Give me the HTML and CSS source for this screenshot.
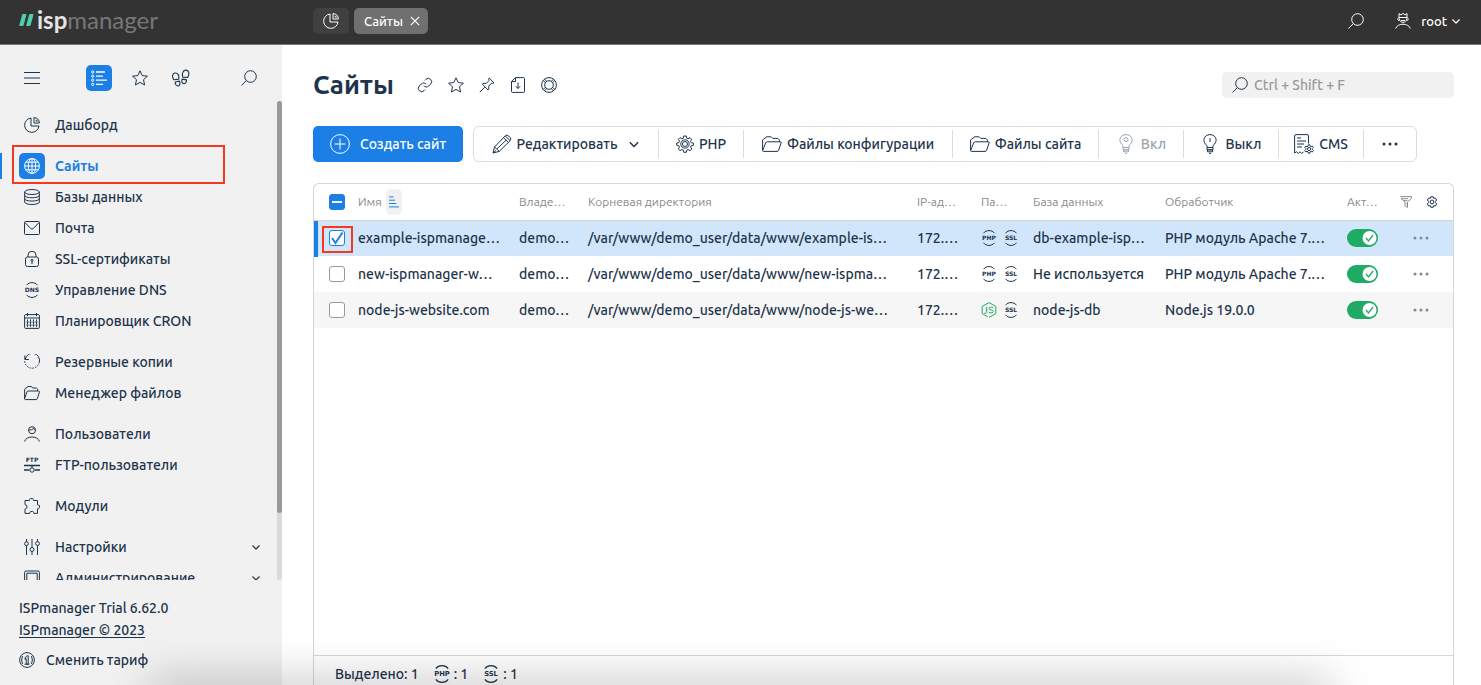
FILE: index.html
```html
<!DOCTYPE html>
<html lang="ru">
<head>
<meta charset="utf-8">
<title>Сайты — ispmanager</title>
<link rel="stylesheet" href="styles.css">
</head>
<body>
<svg class="sprite" aria-hidden="true">
  <symbol id="pie" viewBox="0 0 16 16"><path d="M7 1A7.200 7.200 0 1 0 15 9H7Z"/><path d="M10 .6V6h5.400A5.800 5.800 0 0 0 10 .6ZM12.200 2.800V4h1.600"/></symbol>
  <symbol id="search" viewBox="0 0 16 16"><circle cx="9.500" cy="6.500" r="5.800"/><path d="M5.300 10.600.5 15.500"/></symbol>
  <symbol id="menu" viewBox="0 0 16 16"><path d="M0 2.500h16M0 8h16M0 13.500h16"/></symbol>
  <symbol id="list" viewBox="0 0 16 16"><path stroke-width="1.300" d="M5 2h9M5 6.200h7M5 10.200h11M5 14.400h7"/><circle cx="1.700" cy="2" r="1.100"/><circle cx="1.700" cy="6.200" r="1.100"/><circle cx="1.700" cy="10.200" r="1.100"/><circle cx="1.700" cy="14.400" r="1.100"/></symbol>
  <symbol id="star" viewBox="0 0 16 16"><path d="m8 .8 2.200 4.800 5.200.6-3.900 3.500 1.100 5.300L8 12.400 3.400 15l1.100-5.300L.6 6.200l5.200-.6Z"/></symbol>
  <symbol id="steps" viewBox="0 0 16 16"><path d="M1.800 9.600C-.2 7.300.2 4.200 2.400 3.600 5 3 6.600 5.600 6 9ZM2.800 11.500l3.700-.7c1.100 1.700.6 3.800-.8 4.200-1.600.4-2.900-1.300-2.900-3.500ZM9.600 7.200C8.600 4.500 9.700 1.300 12 1c2.700-.3 4 3 1.900 6.600ZM9 9l3.900.7c0 2.200-1.200 3.700-2.700 3.300C8.800 12.600 8.300 10.700 9 9Z"/></symbol>
  <symbol id="globe" viewBox="0 0 16 16"><circle cx="8" cy="8" r="7.400"/><ellipse cx="8" cy="8" rx="3.700" ry="7.400"/><path d="M8 .6v14.800M.6 8h14.800M1.800 4.200h12.400M1.800 11.800h12.400"/></symbol>
  <symbol id="db" viewBox="0 0 16 16"><ellipse cx="8" cy="3" rx="7.300" ry="2.500"/><path d="M.7 3v10c0 3.300 14.600 3.300 14.600 0V3M.7 6.300c0 3.300 14.600 3.300 14.600 0M.7 9.600c0 3.300 14.600 3.300 14.600 0"/></symbol>
  <symbol id="mail" viewBox="0 0 16 16"><rect x=".5" y="1.500" width="15" height="13" rx="1"/><path d="m1 2.500 5.700 6q1.300 1.200 2.600 0l5.700-6"/></symbol>
  <symbol id="lock" viewBox="0 0 16 16"><rect x="1.500" y="6" width="13" height="9.500" rx="2"/><path d="M4 6V4.200a4 4 0 0 1 8 0V6M8 10v3"/><circle cx="8" cy="9.300" r="1"/></symbol>
  <symbol id="arcs" viewBox="0 0 16 16"><path d="M2.500 3.200c2.600-3.500 8.400-3.500 11 0M2.500 12.800c2.600 3.500 8.400 3.500 11 0"/></symbol>
  <symbol id="cal" viewBox="0 0 16 16"><rect x=".6" y="1.600" width="14.800" height="13.800" rx="1"/><path d="M.6 5h14.800M3.500 0v3M12.500 0v3"/><path stroke-dasharray="2 .6" d="M3.500 6.500v8M6.500 6.500v8M9.500 6.500v8M12.500 6.500v8"/><path opacity=".6" d="M2 9h12M2 12h12"/></symbol>
  <symbol id="backup" viewBox="0 0 16 16"><path d="M1.300 5A7.200 7.200 0 0 1 15.400 8M.8 1.500v4h4"/><path stroke-dasharray="1.600 1.200" d="M15.400 8A7.400 7.400 0 0 1 .7 7"/></symbol>
  <symbol id="folder" viewBox="0 0 20 16"><path d="M.6 14.500V4l1.600-1.600h1L4.300.8h4.800l1.600 1.600h5.200L17.400 4v1.800M.6 14.500 3.700 6.800q.4-1 1.500-1h13q1.400 0 .9 1.200l-2.500 7.300q-.4 1.100-1.600 1.100H1.400q-.8 0-.8-.9Z"/></symbol>
  <symbol id="folder-small" viewBox="0 0 16 16"><path d="M.6 13.700V4.200L1.900 3h.8l1-1.500h3.700L8.600 3h3.800l1.300 1.200V6M.6 13.700 2.900 7q.3-1 1.200-1h10.300q1.300 0 1 1.200l-2 6.300q-.4 1.100-1.400 1.100H1.400q-.8 0-.8-.9Z"/></symbol>
  <symbol id="user" viewBox="0 0 16 16"><circle cx="8" cy="4.200" r="3.500"/><path d="M4.600 4q3.200.5 5-1.500.5 1.400 1.800 1.500M.6 15.500c1.200-6 13.600-6 14.800 0"/></symbol>
  <symbol id="ftp-line" viewBox="0 0 16 16"><path stroke-width="1.300" d="M0 8.500h16M0 13h5.300M10.700 13H16M8 8.500v2.200"/><circle cx="8" cy="13" r="2.200"/></symbol>
  <symbol id="puzzle" viewBox="0 0 16 16"><path d="M1 2.500h4.300c.5-.5-.2-1.800 1.200-1.900h1.800c1.400.1.700 1.400 1.200 1.900h4v4.200c.5.600 1.900-.1 2 1.300v1.500c-.1 1.400-1.500.7-2 1.300v4.600H9.800c-.4-.4.100-1.900-1.200-2H7c-1.300.1-.8 1.600-1.200 2H1v-4.500c.5-.6 1.800.1 1.900-1.300V8C2.800 6.600 1.500 7.300 1 6.700Z"/></symbol>
  <symbol id="sliders" viewBox="0 0 16 16"><path d="M2.500 0v3M2.500 6.500V16M8 0v8.500M8 12.500V16M13.500 0v2.500M13.500 6.500V16"/><circle cx="2.500" cy="4.700" r="1.900"/><circle cx="8" cy="10.500" r="2"/><circle cx="13.500" cy="4.500" r="1.900"/></symbol>
  <symbol id="screen" viewBox="0 0 16 16"><path d="M.6 13V2.500Q.6 1 2 1h12q1.400 0 1.400 1.500V13M2.800 13V3.200h10.400V13M0 15h16"/></symbol>
  <symbol id="down" viewBox="0 0 10 10"><path stroke-width="1.200" d="m1.500 3.500 3.500 3.500 3.500-3.500"/></symbol>
  <symbol id="coin" viewBox="0 0 16 16"><circle cx="8" cy="8" r="7.400"/><path d="M3.500 4q-1.800 4 0 8M12.500 4q1.800 4 0 8M6 6l1.800-2.200h1.400v8.400h-2V6.600L6 7.500ZM5.500 12.200h5"/></symbol>
  <symbol id="close" viewBox="0 0 10 10"><path stroke-width="1.200" d="m.8.8 8.400 8.400M9.200.8.8 9.200"/></symbol>
  <symbol id="king" viewBox="0 0 16 16"><path d="M4 .5 6 2l2-1.700L10 2l2-1.500v4H4ZM3.800 4.500C2.400 5.200 2.500 7.500 4 7.500M12.200 4.500c1.400.7 1.300 3-.2 3M4.300 5.500c0 5.200 7.400 5.200 7.400 0M6 7.500h4M.7 15.500c1.800-5.700 12.800-5.700 14.600 0"/></symbol>
  <symbol id="link" viewBox="0 0 24 24"><path stroke-width="1.500" d="M10 13a5 5 0 0 0 7.540.54l3-3a5 5 0 0 0-7.070-7.070l-1.720 1.710M14 11a5 5 0 0 0-7.540-.54l-3 3a5 5 0 0 0 7.070 7.070l1.710-1.710"/></symbol>
  <symbol id="pin" viewBox="0 0 16 16"><path d="m10.200 1 4.800 4.800q-1.200 1-2.400.4l-3 3q.9 2-.5 3.800L3.300 7.100q1.800-1.400 3.700-.5l3-3Q9.300 2.200 10.200 1ZM5.800 10.200.8 15.200"/></symbol>
  <symbol id="doc" viewBox="0 0 16 16"><path d="M5.500.6h8q1 0 1 1v12.800q0 1-1 1h-11q-1 0-1-1V4.600ZM5.500.6v4h-4M8 5.500v6M5.800 9.200 8 11.500l2.200-2.300"/></symbol>
  <symbol id="ring" viewBox="0 0 16 16"><circle cx="8" cy="8" r="7.400"/><circle cx="8" cy="8" r="4.300"/><path d="M3.500 2.200 5.700 4.400M2.200 3.500 4.400 5.700M12.500 2.200l-2.200 2.200M13.800 3.500l-2.200 2.200M3.500 13.800l2.200-2.200M2.200 12.500l2.200-2.200M12.500 13.800l-2.200-2.200M13.800 12.500l-2.200-2.200"/></symbol>
  <symbol id="plus" viewBox="0 0 20 20"><circle cx="10" cy="10" r="9.400"/><path d="M10 4.500v11M4.500 10h11"/></symbol>
  <symbol id="pencil" viewBox="0 0 20 20"><path d="m1 19 1.500-6L13.200 1.900q1.600-1.500 3.300 0L18 3.400q1.700 1.700.1 3.300L7.300 17.400ZM2.500 13l4.800 4.400M11.500 3.700l4.900 4.800M5 14.800 14.300 6M1 19l3-2.500M13.200 1.900l4.900 4.800"/></symbol>
  <symbol id="gear" viewBox="0 0 18 18"><path d="m7.700 1h2.600l.4 2.200 1.300.6 2-1.200 1.600 1.700-1 2 .6 1.300 2.200.4v2.300l-2.200.5-.6 1.300 1.200 1.900-1.700 1.700-2-1.200-1.300.6-.5 2.200H7.800l-.5-2.200-1.400-.6-1.900 1.200L2.300 14l1.200-1.900-.6-1.300-2.200-.5V8l2.200-.4.6-1.400-1.200-1.900L4 2.600l1.900 1.200 1.400-.6Z"/><circle cx="9" cy="9" r="4.200"/><circle cx="9" cy="9" r="2.500"/></symbol>
  <symbol id="bulb-on" viewBox="0 0 14 20"><path d="M4 13.500v-2C-1.300 8 .5.600 7 .6S15.300 8 10 11.500v2ZM4 13.500h6v2.300H4ZM4.500 15.800h5v2h-5ZM6 19.400h2"/><circle cx="7" cy="5.600" r="2"/></symbol>
  <symbol id="bulb-off" viewBox="0 0 14 20"><path d="M4 13.500v-2C-1.300 8 .5.600 7 .6S15.300 8 10 11.500v2ZM4 13.500h6v2.300H4ZM4.500 15.800h5v2h-5ZM6 19.400h2M7 4v4"/></symbol>
  <symbol id="cms" viewBox="0 0 20 20"><path d="M14.500 9.500V2Q14.500.6 13 .6H2Q.6.600.6 2v17l1.800-1.200 1.800 1.600L6 17.800l1.800 1.600 1.700-1.200M3 4h4M3 7h9M3 10h7M3 13h5"/><path d="M14.300 10.800h1.600l.3 1.400 1 .5 1.300-.6.9 1.400-1 1v1l1 1-.9 1.400-1.300-.6-1 .5-.3 1.400h-1.600l-.3-1.400-1-.5-1.300.6-.9-1.400 1-1v-1l-1-1 .9-1.400 1.300.6 1-.5Z"/><circle cx="15.100" cy="15" r="1.600"/></symbol>
  <symbol id="dots" viewBox="0 0 16 4"><circle cx="2" cy="2" r="1.500"/><circle cx="8" cy="2" r="1.500"/><circle cx="14" cy="2" r="1.500"/></symbol>
  <symbol id="sort" viewBox="0 0 10 12"><path d="M0 .9h4.500M0 4.200h6M0 7.500h7.500M0 10.900h10"/></symbol>
  <symbol id="filter" viewBox="0 0 12 12"><path d="M.6.600h10.800v1.800L7.500 6v5.400L5 9.800V6L1 2.400M1 2.700h7M3.500 4.700h4M7.500 8H6"/></symbol>
  <symbol id="cog" viewBox="0 0 12 12"><path d="M4.800.7h2.400l.5 1.600 1.700-.3 1.200 2-1 1.300v1.400l1 1.300-1.200 2-1.700-.3-.5 1.600H4.800l-.5-1.600-1.700.3-1.200-2 1-1.300V5.300l-1-1.300 1.200-2 1.700.3Z"/><circle cx="6" cy="6" r="1.900"/></symbol>
  <symbol id="node" viewBox="0 0 16 16"><path d="M6.800 14.800 1.200 11.600V4.400L8 .6l6.800 3.800v7.200L8 15.400M5.700 4.800v5.700q-.2 1.400-2.400.7M12.200 5.400Q8 4.500 8 6.600c0 2 4.300.6 4.300 2.800 0 1.700-2.500 1.600-4.400 1"/></symbol>
</svg>

<header class="topbar">
  <a class="logo" href="#"><svg class="logo-mark" viewBox="0 0 15 12"><path d="M3.700.5H7L4 11.500H.7ZM10.700.5H14l-3 11H7.700Z"/></svg><span><b>isp</b>manager</span></a>
  <nav class="tabs">
    <button class="tab tab-icon" aria-label="Дашборд"><svg class="i16"><use href="#pie"/></svg></button>
    <button class="tab tab-current">Сайты <svg class="i10"><use href="#close"/></svg></button>
  </nav>
  <div class="account">
    <button aria-label="Поиск"><svg class="i16"><use href="#search"/></svg></button>
    <button class="account-user"><svg class="i16"><use href="#king"/></svg><span>root</span><svg class="i10"><use href="#down"/></svg></button>
  </div>
</header>

<div class="layout">
  <aside class="sidebar">
    <div class="side-tools">
      <button aria-label="Меню"><svg class="i16"><use href="#menu"/></svg></button>
      <button class="side-mode" aria-label="Список"><svg class="i16"><use href="#list"/></svg></button>
      <button aria-label="Избранное"><svg class="i16"><use href="#star"/></svg></button>
      <button aria-label="История"><svg class="i18"><use href="#steps"/></svg></button>
      <button class="side-search" aria-label="Поиск"><svg class="i16"><use href="#search"/></svg></button>
    </div>
    <div class="side-scroll">
      <nav class="menu">
        <ul>
          <li><a href="#"><svg class="i16"><use href="#pie"/></svg>Дашборд</a></li>
        </ul>
        <ul>
          <li class="active"><a href="#"><span class="active-icon"><svg class="i16"><use href="#globe"/></svg></span>Сайты</a></li>
          <li><a href="#"><svg class="i16"><use href="#db"/></svg>Базы данных</a></li>
          <li><a href="#"><svg class="i16"><use href="#mail"/></svg>Почта</a></li>
          <li><a href="#"><svg class="i16"><use href="#lock"/></svg>SSL-сертификаты</a></li>
          <li><a href="#"><svg class="i16 badge" viewBox="0 0 16 16"><use href="#arcs"/><text x="8" y="10">DNS</text></svg>Управление DNS</a></li>
          <li><a href="#"><svg class="i16"><use href="#cal"/></svg>Планировщик CRON</a></li>
        </ul>
        <ul>
          <li><a href="#"><svg class="i16"><use href="#backup"/></svg>Резервные копии</a></li>
          <li><a href="#"><svg class="i16"><use href="#folder-small"/></svg>Менеджер файлов</a></li>
        </ul>
        <ul>
          <li><a href="#"><svg class="i16"><use href="#user"/></svg>Пользователи</a></li>
          <li><a href="#"><svg class="i16 badge" viewBox="0 0 16 16"><use href="#ftp-line"/><text x="8" y="5">FTP</text></svg>FTP-пользователи</a></li>
        </ul>
        <ul>
          <li><a href="#"><svg class="i16"><use href="#puzzle"/></svg>Модули</a></li>
        </ul>
        <ul>
          <li><a href="#"><svg class="i16"><use href="#sliders"/></svg>Настройки<svg class="i10 caret"><use href="#down"/></svg></a></li>
          <li><a href="#"><svg class="i16"><use href="#screen"/></svg>Администрирование<svg class="i10 caret"><use href="#down"/></svg></a></li>
        </ul>
      </nav>
      <div class="scroll-track"><div class="scroll-thumb"></div></div>
    </div>
    <footer class="side-footer">
      <p>ISPmanager Trial 6.62.0</p>
      <p><a href="#">ISPmanager © 2023</a></p>
      <button class="plan"><svg class="i16"><use href="#coin"/></svg>Сменить тариф</button>
    </footer>
  </aside>

  <main class="content">
    <div class="heading">
      <h1>Сайты</h1>
      <div class="heading-tools">
        <button aria-label="Ссылка"><svg class="i16"><use href="#link"/></svg></button>
        <button aria-label="В избранное"><svg class="i16"><use href="#star"/></svg></button>
        <button aria-label="Закрепить"><svg class="i16"><use href="#pin"/></svg></button>
        <button aria-label="Скачать"><svg class="i16"><use href="#doc"/></svg></button>
        <button aria-label="Помощь"><svg class="i16"><use href="#ring"/></svg></button>
      </div>
      <label class="search"><svg class="i16"><use href="#search"/></svg><input type="text" placeholder="Ctrl + Shift + F" aria-label="Поиск по таблице"></label>
    </div>

    <div class="toolbar">
      <button class="create"><svg class="i20"><use href="#plus"/></svg>Создать сайт</button>
      <div class="actions">
        <button class="w-edit"><svg class="i20"><use href="#pencil"/></svg><span>Редактировать</span><svg class="i12"><use href="#down"/></svg></button>
        <button class="w-small"><svg class="i18"><use href="#gear"/></svg>PHP</button>
        <button class="w-wide"><svg class="i20"><use href="#folder"/></svg>Файлы конфигурации</button>
        <button class="w-mid"><svg class="i20"><use href="#folder"/></svg>Файлы сайта</button>
        <button class="w-small" disabled><svg class="i20"><use href="#bulb-on"/></svg>Вкл</button>
        <button class="w-off"><svg class="i20"><use href="#bulb-off"/></svg>Выкл</button>
        <button class="w-small"><svg class="i20"><use href="#cms"/></svg>CMS</button>
        <button class="w-more" aria-label="Ещё"><svg class="idots"><use href="#dots"/></svg></button>
      </div>
    </div>

    <section class="panel">
      <table>
        <colgroup><col class="c-check"><col class="c-name"><col class="c-owner"><col><col class="c-ip"><col class="c-params"><col class="c-db"><col class="c-handler"><col class="c-active"><col class="c-menu"></colgroup>
        <thead>
          <tr>
            <th class="check"><input type="checkbox" class="partial" aria-label="Выбрать все"></th>
            <th><span class="sorted">Имя <button class="sort" aria-label="Сортировка"><svg><use href="#sort"/></svg></button></span></th>
            <th>Владе…</th><th>Корневая директория</th><th>IP-ад…</th><th>Па…</th><th>База данных</th><th>Обработчик</th><th>Акт…</th>
            <th><span class="head-tools"><button class="funnel" aria-label="Фильтр"><svg class="i12"><use href="#filter"/></svg></button><button aria-label="Настройка таблицы"><svg class="i12"><use href="#cog"/></svg></button></span></th>
          </tr>
        </thead>
        <tbody>
          <tr class="selected">
            <td class="check"><input type="checkbox" checked aria-label="example-ispmanager"></td>
            <td>example-ispmanage…</td><td>demo…</td><td>/var/www/demo_user/data/www/example-is…</td><td>172.…</td>
            <td><span class="params"><svg class="i16 badge" viewBox="0 0 16 16"><use href="#arcs"/><text x="8" y="10">PHP</text></svg><svg class="i16 badge" viewBox="0 0 16 16"><use href="#arcs"/><text x="8" y="10">SSL</text></svg></span></td>
            <td>db-example-isp…</td><td>PHP модуль Apache 7.…</td>
            <td><input type="checkbox" class="toggle" checked aria-label="Активен"></td>
            <td class="row-menu"><button aria-label="Меню строки"><svg class="idots"><use href="#dots"/></svg></button></td>
          </tr>
          <tr>
            <td class="check"><input type="checkbox" aria-label="new-ispmanager-website"></td>
            <td>new-ispmanager-w…</td><td>demo…</td><td>/var/www/demo_user/data/www/new-ispma…</td><td>172.…</td>
            <td><span class="params"><svg class="i16 badge" viewBox="0 0 16 16"><use href="#arcs"/><text x="8" y="10">PHP</text></svg><svg class="i16 badge" viewBox="0 0 16 16"><use href="#arcs"/><text x="8" y="10">SSL</text></svg></span></td>
            <td>Не используется</td><td>PHP модуль Apache 7.…</td>
            <td><input type="checkbox" class="toggle" checked aria-label="Активен"></td>
            <td class="row-menu"><button aria-label="Меню строки"><svg class="idots"><use href="#dots"/></svg></button></td>
          </tr>
          <tr>
            <td class="check"><input type="checkbox" aria-label="node-js-website.com"></td>
            <td>node-js-website.com</td><td>demo…</td><td>/var/www/demo_user/data/www/node-js-we…</td><td>172.…</td>
            <td><span class="params"><svg class="i16 node"><use href="#node"/></svg><svg class="i16 badge" viewBox="0 0 16 16"><use href="#arcs"/><text x="8" y="10">SSL</text></svg></span></td>
            <td>node-js-db</td><td>Node.js 19.0.0</td>
            <td><input type="checkbox" class="toggle" checked aria-label="Активен"></td>
            <td class="row-menu"><button aria-label="Меню строки"><svg class="idots"><use href="#dots"/></svg></button></td>
          </tr>
        </tbody>
      </table>
      <footer class="summary">
        <span>Выделено: 1</span>
        <span class="count"><svg class="i18 badge" viewBox="0 0 16 16"><use href="#arcs"/><text x="8" y="10">PHP</text></svg>: 1</span>
        <span class="count"><svg class="i18 badge" viewBox="0 0 16 16"><use href="#arcs"/><text x="8" y="10">SSL</text></svg>: 1</span>
      </footer>
    </section>
  </main>
</div>
<div class="bottom-shade"></div>
</body>
</html>
```
FILE: styles.css
```css
*, *::before, *::after { box-sizing: border-box; }
body {
  margin: 0;
  height: 100vh;
  display: flex;
  flex-direction: column;
  overflow: hidden;
  font: 500 14px/20px Ubuntu, "Noto Sans", sans-serif;
  color: #1d344c;
  background: #fff;
}
button {
  display: inline-flex;
  align-items: center;
  justify-content: center;
  padding: 0;
  border: 0;
  background: none;
  color: inherit;
  font: inherit;
  white-space: nowrap;
  cursor: pointer;
}
a { color: inherit; text-decoration: none; }
ul, p, h1 { margin: 0; padding: 0; list-style: none; }
svg { flex: none; display: block; fill: none; stroke: currentColor; stroke-width: 1; stroke-linejoin: round; overflow: hidden; }
.badge { overflow: visible; }
.badge text { font: 700 6px "DejaVu Sans", sans-serif; fill: currentColor; stroke: none; text-anchor: middle; }
.sprite { position: absolute; width: 0; height: 0; }
.i10 { width: 10px; height: 10px; }
.i12 { width: 12px; height: 12px; }
.i16 { width: 16px; height: 16px; }
.i18 { width: 18px; height: 18px; }
.i20 { width: 20px; height: 20px; }
.idots { width: 16px; height: 4px; fill: currentColor; stroke: none; }

.topbar {
  flex: none;
  display: flex;
  align-items: center;
  height: 45px;
  padding: 0 20px 2px 19px;
  background: #333;
  border-bottom: 1px solid #777;
  color: #fff;
}
.logo { display: flex; align-items: center; gap: 3px; width: 294px; padding-bottom: 2px; font: 400 24px/28px Lato, sans-serif; color: #777; }
.logo b { color: #e4e4e4; }
.logo-mark { width: 15px; height: 12px; fill: #50d0ac; stroke: #50d0ac; }
.tabs { display: flex; gap: 5px; }
.tab { height: 26px; border-radius: 5px; font-size: 13px; }
.tab-icon { width: 36px; background: #404040; }
.tab-current { gap: 7px; padding: 0 8px 0 10px; background: #707070; }
.account { margin-left: auto; display: flex; align-items: center; gap: 31px; font-size: 13px; }
.account-user { gap: 10px; }
.account-user .i10 { margin-left: -6px; }

.layout { flex: 1; min-height: 0; display: flex; }
.sidebar { flex: none; width: 282px; display: flex; flex-direction: column; background: #f1f1f1; }
.side-tools { display: flex; align-items: center; height: 56px; padding: 10px 25px 0 24px; }
.side-mode { width: 26px; height: 26px; margin: 0 20px 0 46px; border-radius: 5px; background: #1b7fe5; color: #fff; }
.side-tools .i18 { margin-left: 24px; }
.side-search { margin-left: auto; }
.side-scroll { display: flex; height: 479px; flex: 0 1 auto; overflow: hidden; }
.menu { flex: 1; display: flex; flex-direction: column; gap: 10px; padding-top: 8px; }
.menu li { position: relative; height: 31px; }
.menu a { display: flex; align-items: center; gap: 15px; height: 31px; padding: 0 16px 0 24px; }
.caret { margin-left: auto; }
.active { color: #1b7fe5; font-weight: 600; }
.menu .active a { gap: 10px; padding-left: 19px; }
.active::before { content: ""; position: absolute; left: 0; top: 3px; width: 2px; height: 26px; background: #1b7fe5; }
.active::after { content: ""; position: absolute; left: 12px; top: -5px; width: 213px; height: 39px; border: 2px solid #f33a20; pointer-events: none; }
.active-icon { display: flex; align-items: center; justify-content: center; width: 26px; height: 26px; border-radius: 5px; background: #1b7fe5; color: #fff; }
.scroll-track { width: 5px; background: #dadada; border-radius: 3px; }
.scroll-thumb { height: 86%; background: #999; border-radius: 3px; }
.side-footer { padding: 17px 19px 0; line-height: 22px; }
.side-footer p a { text-decoration: underline; text-underline-offset: 2px; }
.plan { gap: 11px; margin-top: 8px; }

.content { flex: 1; min-width: 0; display: flex; flex-direction: column; padding: 23px 27px 0 31px; }
.heading { display: flex; align-items: center; height: 34px; }
.heading h1 { font-size: 26px; line-height: 34px; font-weight: 700; }
.heading-tools { display: flex; gap: 15px; margin-left: 23px; }
.search { display: flex; align-items: center; gap: 6px; width: 232px; height: 26px; margin-left: auto; padding: 0 10px; border-radius: 5px; background: #f1f1f1; }
.search input { flex: 1; min-width: 0; padding: 0; border: 0; outline: 0; background: none; font: inherit; color: inherit; }
.search input::placeholder { color: #999; opacity: 1; }

.toolbar { display: flex; gap: 10px; margin-top: 24px; }
.create { gap: 10px; height: 36px; min-width: 150px; padding: 0 14px; border-radius: 5px; background: #1b7fe5; color: #fff; }
.actions { display: flex; height: 36px; padding: 3px 0; border: 1px solid #dcdcdc; border-radius: 6px; }
.actions button { gap: 5px; padding: 0 12px; border-left: 1px solid #dcdcdc; }
.actions button:first-child { border-left: 0; }
.actions button:disabled { color: #9aa5b1; }
.actions .i12 { margin-left: 6px; }
.w-edit { min-width: 184px; }
.w-small { min-width: 85px; }
.w-wide { min-width: 209px; }
.w-mid { min-width: 146px; }
.w-off { min-width: 95px; }
.w-more { min-width: 53px; }

.panel { flex: 1; display: flex; flex-direction: column; margin-top: 21px; border: 1px solid #d6d6d6; border-bottom: 0; border-radius: 6px 6px 0 0; overflow: hidden; }
table { width: 100%; table-layout: fixed; border-collapse: collapse; }
.c-check { width: 36px; }
.c-name { width: 161px; }
.c-owner { width: 69px; }
.c-ip { width: 64px; }
.c-params { width: 52px; }
.c-db { width: 132px; }
.c-handler { width: 182px; }
.c-active { width: 56px; }
.c-menu { width: 58px; }
th, td { height: 36px; padding: 0 0 0 8px; text-align: left; white-space: nowrap; }
th { font-size: 12px; font-weight: 400; color: #8a8a8a; border-bottom: 1px solid #d6d6d6; }
.check { position: relative; padding-left: 15px; }
.selected { background: #d1e5fb; }
.selected .check::before { content: ""; position: absolute; left: 0; top: 0; width: 4px; height: 36px; background: #1b7fe5; }
.selected .check::after { content: ""; position: absolute; left: 8px; top: 5px; width: 31px; height: 27px; border: 2px solid #f33a20; pointer-events: none; }
tbody tr:nth-child(3) { background: #f6f6f6; }
input[type="checkbox"] { appearance: none; display: block; width: 16px; height: 16px; margin: 0; border: 1px solid #999; border-radius: 3px; background: #fff; }
.check input:checked { border-color: #1b7fe5; background: #fff url("data:image/svg+xml,%3Csvg xmlns='http://www.w3.org/2000/svg' viewBox='0 0 14 14'%3E%3Cpath d='M2 7l3.500 5L12.500 1.500' fill='none' stroke='%231b7fe5' stroke-width='2'/%3E%3C/svg%3E"); }
input.partial[type="checkbox"] { border-color: #1b7fe5; background: linear-gradient(#fff, #fff) center / 10px 2px no-repeat #1b7fe5; }
input.toggle[type="checkbox"] { width: 31px; height: 18px; border: 0; border-radius: 9px; background: #1fab64 url("data:image/svg+xml,%3Csvg xmlns='http://www.w3.org/2000/svg' viewBox='0 0 31 18'%3E%3Ccircle cx='22.500' cy='9' r='7' fill='white'/%3E%3Cpath d='M19 9l2.500 3L26 6' fill='none' stroke='%231fab64' stroke-width='1.300'/%3E%3C/svg%3E"); }
.sorted { display: flex; align-items: center; gap: 4px; }
.sort { width: 16px; height: 26px; border-radius: 5px; background: #f1f1f1; color: #1b7fe5; }
.sort svg { width: 10px; height: 12px; }
.head-tools { display: flex; gap: 14px; margin-left: -3px; color: #1d344c; }
.funnel { color: #8a8a8a; }
.params { display: flex; gap: 6px; }
.node { color: #1fab64; }
.row-menu { color: #7f8a96; padding-left: 18px; }
.row-menu button { display: flex; }
.summary { display: flex; gap: 14px; margin-top: auto; height: 30px; padding: 8px 21px 0; border-top: 1px solid #d6d6d6; }
.count { display: flex; align-items: center; gap: 3px; height: 20px; }
.bottom-shade { position: fixed; left: 150px; right: 150px; bottom: -20px; height: 20px; box-shadow: 0 0 45px 0 rgba(0, 0, 0, .36); pointer-events: none; }
```
